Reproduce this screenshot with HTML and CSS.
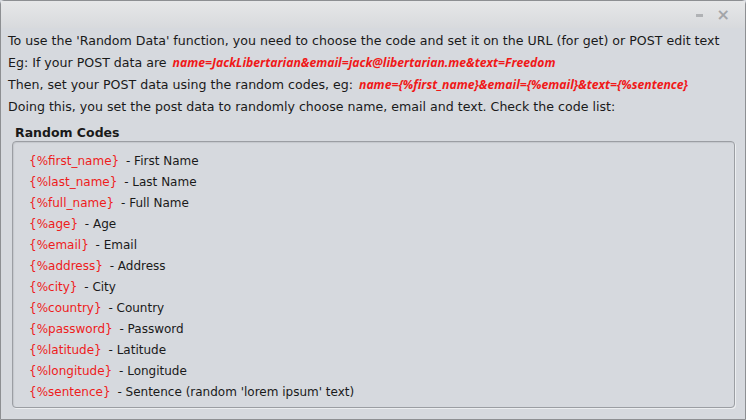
FILE: index.html
```html
<!DOCTYPE html>
<html lang="en">
<head>
    <meta charset="UTF-8">
    <title>Random Data</title>
    <link rel="stylesheet" href="styles.css">
</head>
<body>
    <div class="window">
        <div class="titlebar">
            <span class="btn-min"></span>
            <span class="btn-close">&times;</span>
        </div>
        <div class="content">
            <p class="line">To use the 'Random Data' function, you need to choose the code and set it on the URL (for get) or POST edit text</p>
            <p class="line">Eg: If your POST data are <span class="sample">name=JackLibertarian&amp;email=jack@libertarian.me&amp;text=Freedom</span></p>
            <p class="line">Then, set your POST data using the random codes, eg: <span class="sample">name={%first_name}&amp;email={%email}&amp;text={%sentence}</span></p>
            <p class="line">Doing this, you set the post data to randomly choose name, email and text. Check the code list:</p>

            <h3 class="group-title">Random Codes</h3>
            <ul class="codes">
                <li><span class="code">{%first_name}</span> - First Name</li>
                <li><span class="code">{%last_name}</span> - Last Name</li>
                <li><span class="code">{%full_name}</span> - Full Name</li>
                <li><span class="code">{%age}</span> - Age</li>
                <li><span class="code">{%email}</span> - Email</li>
                <li><span class="code">{%address}</span> - Address</li>
                <li><span class="code">{%city}</span> - City</li>
                <li><span class="code">{%country}</span> - Country</li>
                <li><span class="code">{%password}</span> - Password</li>
                <li><span class="code">{%latitude}</span> - Latitude</li>
                <li><span class="code">{%longitude}</span> - Longitude</li>
                <li><span class="code">{%sentence}</span> - Sentence (random 'lorem ipsum' text)</li>
            </ul>
        </div>
    </div>
</body>
</html>
```

FILE: styles.css
```css
body {
    margin: 0;
    padding: 0;
    background: #d6d9de;
    font-family: "DejaVu Sans", sans-serif;
    font-size: 12px;
    color: #1a1a1a;
}
.window {
    height: 418px;
    border: 1px solid #8d8f92;
    border-radius: 4px 4px 0 0;
    background: #d6d9de;
}
.titlebar {
    height: 27px;
    display: flex;
    justify-content: flex-end;
    align-items: center;
    gap: 14px;
    padding-right: 15px;
    background: linear-gradient(#e6e7e8, #d8dadd);
    color: #a3a5a8;
    font-size: 16px;
    font-weight: bold;
}
.btn-min {
    width: 7px;
    height: 3px;
    margin-top: 2px;
    background: #b0b2b5;
}
.content {
    padding: 2px 8px 0 7px;
}
.line {
    margin: 0;
    height: 22px;
    line-height: 22px;
    font-size: 12.6px;
    white-space: nowrap;
}
.sample {
    color: #f01818;
    font-family: "Open Sans", sans-serif;
    font-weight: bold;
    font-style: italic;
    font-size: 12.2px;
    margin-left: 2px;
}
.group-title {
    margin: 7px 0 0 7px;
    font-size: 12.5px;
    font-weight: bold;
    line-height: 16px;
}
.codes {
    list-style: none;
    margin: 0 2px 0 4px;
    padding: 9px 16px 4px;
    height: 252px;
    border: 1px solid #9b9ea3;
    border-radius: 4px;
    box-shadow: inset 1px 1px 1px rgba(0, 0, 0, 0.08), 1px 1px 0 #eceef0;
}
.codes li {
    height: 21px;
    line-height: 21px;
}
.code {
    color: #ee1c1c;
    margin-right: 3px;
}
```
